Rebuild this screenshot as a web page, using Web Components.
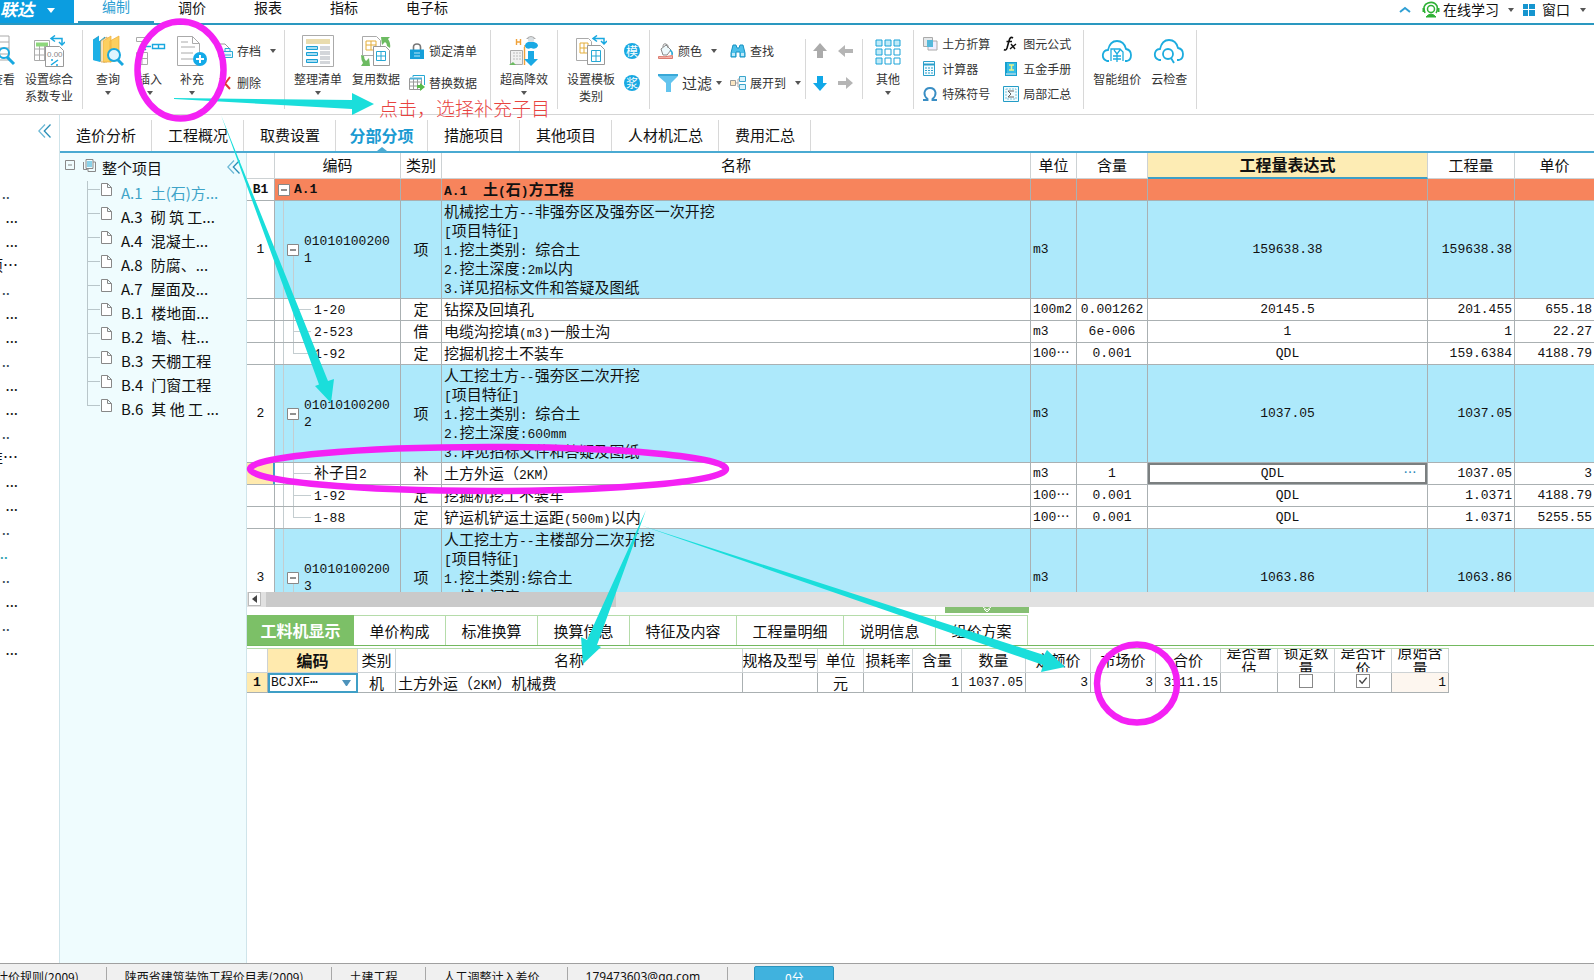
<!DOCTYPE html>
<html lang="zh-CN">
<head>
<meta charset="utf-8">
<title>工程计价 - 分部分项</title>
<style>
html,body{margin:0;height:100%;overflow:hidden;background:#fff;color:#111;font-family:"Noto Sans CJK SC",sans-serif;font-size:15px}
</style>
</head>
<body>
<cost-app></cost-app>
<script>
const icon = {
  down: '<svg width="6" height="4" viewBox="0 0 6 4"><path d="M0 0h6L3 4z" fill="#555"/></svg>',
  fold: '<svg width="14" height="14" viewBox="0 0 14 14" fill="none" stroke-width="1.3"><path d="M7 .5.8 7 7 13.500" stroke="#6db9d6"/><path d="M12.500 .5 6.300 7l6.200 6.500" stroke="#2a8fb8"/></svg>',
  view: '<svg width="32" height="32" viewBox="0 0 32 32" fill="none"><path d="M2 1h20v24H2zM2 7h20M2 13h20M2 19h20" stroke="#aaa"/><circle cx="17" cy="18" r="5" stroke="#18a8e0" stroke-width="2"/><path d="m20 22 7 7" stroke="#18a8e0" stroke-width="3"/></svg>',
  rate: '<svg width="32" height="32" viewBox="0 0 32 32" fill="none"><path d="M1.500 5.500h15v20h-15zM1.500 14h15M1.500 20h15M6.500 11v14M11.500 11v14" stroke="#aaa"/><path d="M3 7.500h12v4H3z" fill="#8ed77c"/><path d="M12.500 11.500h14l4 4v16h-18z" fill="#fff" stroke="#999"/><text x="14" y="22" font-size="8" fill="#888" font-family="Liberation Sans">0.00</text><path d="m18 30 7-5M18 25h2M23 30h2" stroke="#18a8e0" stroke-width="1.500"/><path d="M18 3.500h11v5M22 .5l-4 3 4 3M26 7l3 3 3-3" stroke="#18a8e0" stroke-width="1.500"/></svg>',
  query: '<svg width="32" height="32" viewBox="0 0 32 32" fill="none"><path d="m1 5 6-4v25l-6-1z" fill="#1cb0e6"/><path d="m1 5 6-4M8 26V6l5-4v25z" fill="#48c4ee" stroke="#138fc0" stroke-width=".7"/><path d="m1 5v20l7 2V6z" fill="#1cb0e6"/><path d="m9 6 6-4v25H9z" fill="#fff" stroke="#d99a34" stroke-width=".7"/><path d="M11 6 19 1v26h-8zM18 6l9-5v24l-9 2z" fill="#fccf5f" stroke="#ecac3a" stroke-width=".7"/><circle cx="22" cy="20" r="6" fill="#dff5fe" stroke="#18a8e0" stroke-width="2"/><path d="m26 25 5 5" stroke="#18a8e0" stroke-width="3"/></svg>',
  insert: '<svg width="32" height="32" viewBox="0 0 32 32" fill="none"><path d="M2.500 2.500h11v4h-11zM2.500 17.500h11v12h-11zM2.500 23.500h11M8 17v12" stroke="#aaa"/><path d="M18.500 9.500h12v4h-12zM24.500 9v5" stroke="#18a8e0" stroke-width="1.400"/><path d="M17 11.500H9M12 8l-4 3.500 4 3.500" stroke="#18a8e0" stroke-width="1.400"/></svg>',
  add: '<svg width="32" height="32" viewBox="0 0 32 32" fill="none"><path d="M1.500 1.500h15l7 7v22h-22z" fill="#fff" stroke="#aaa"/><path d="M16.500 1.500v7h7M5 7h7M5 12h14M5 18h12M5 24h12" stroke="#aaa"/><circle cx="24" cy="24" r="7" fill="#13aae8"/><path d="M20 24h8M24 20v8" stroke="#fff" stroke-width="2"/></svg>',
  store: '<svg width="16" height="16" viewBox="0 0 16 16" fill="none"><path d="M2 1h6l4 4v9H2z" stroke="#999"/><path d="M6.500 8.500h9v6h-9zM8 8V5.500h5V8M8 12h6" fill="#e7f8fd" stroke="#27a8d4"/></svg>',
  del: '<svg width="16" height="16" viewBox="0 0 16 16"><path d="m3 3 10 11M13 2 4 14" stroke="#e03434" stroke-width="2" fill="none"/></svg>',
  tidy: '<svg width="32" height="32" viewBox="0 0 32 32" fill="none"><path d="M.5.5h31v31H.5z" fill="#fff" stroke="#aaa"/><path d="M4 4h24v5H4z" fill="#e9dcae"/><path d="M18 11h10v4H18zM18 16h10v4H18zM18 21h10v4H18zM18 26h10v3H18z" fill="#d3d6da"/><path d="M4.500 11.500h11v3h-11zM4.500 17.500h11v3h-11zM4.500 24.500h11v3h-11z" fill="#a9def2" stroke="#1aa0d4"/></svg>',
  reuse: '<svg width="32" height="32" viewBox="0 0 32 32" fill="none"><path d="M2.500 1.500h14l4 4v15h-18z" fill="#fff" stroke="#aaa"/><path d="M6 6h10v9H6zM6 10h10M11 6v9" stroke="#e4ae3a"/><path d="M13.500 11.500h12l4 4v15h-16z" fill="#fff" stroke="#999"/><path d="M16.500 16.500h9v9h-9zM16.500 21h9M21 16v10" stroke="#27a8d4"/><path d="M21 2h9l-2 2q3 4 2 9l-3-2q0-3-2-4l-3 3zM10 31H1l2-3q-2-3-2-8l3 1q0 3 2 5l3-3z" fill="#6dbb62"/></svg>',
  lock: '<svg width="16" height="16" viewBox="0 0 16 16" fill="none"><path d="M4.500 7V4q0-3 3.500-3t3.500 3v3" stroke="#777" stroke-width="1.600"/><path d="M1 6.500h14V16H1z" fill="#159fd9"/><path d="M5 10h6M5 13h6" stroke="#b7e6f8"/></svg>',
  swap: '<svg width="16" height="16" viewBox="0 0 16 16" fill="none"><path d="M4 2V.5h11.500V10" stroke="#27a8d4"/><path d="M.5 3.500h12v11H.5zM.5 7h12M.5 11h12M4.500 4v10M8.500 4v10" stroke="#999"/><path d="M1 3.500h12" stroke="#52b2d8" stroke-width="2"/><path d="M8 10h3V8l5 4-5 4v-3H8z" fill="#58bc4b"/></svg>',
  high: '<svg width="32" height="32" viewBox="0 0 32 32" fill="none"><path d="M2.500 15.500h12v14h-12z" fill="#f1f1f1" stroke="#aaa"/><path d="M5 18h8M5 21h8M5 24h8" stroke="#bbb" stroke-dasharray="2 1"/><path d="m1 30 4-3 3 3z" fill="#6dbb62"/><path d="M16.500 12v18M8.500 4v6M12.500 4v6M8 7h5M16 11h4" stroke="#f0a23a" stroke-width="1.400"/><path d="M18 4q5-6 10 0z" fill="#aaa"/><circle cx="23" cy="5" r="3" fill="#d9dfe2"/><path d="M20 7h6q4 1 4 4-2 4-7 2-5 2-6-2 0-3 3-4zM20 16h6v8h4l-7 7-7-7h4z" fill="#1aa9e4"/></svg>',
  form: '<svg width="32" height="32" viewBox="0 0 32 32" fill="none"><path d="M1.500 3.500h12l3 3v19h-15z" fill="#fff" stroke="#aaa"/><path d="M5 8h8v10H5zM5 13h8M9 8v10" stroke="#e4ae3a"/><path d="M12.500 10.500h13l4 4v15h-17z" fill="#fff" stroke="#999"/><path d="M16.500 15.500h9v11h-9zM16.500 21h9M21 15v12" stroke="#27a8d4"/><path d="M18 3.500h11v5M22 .5l-4 3 4 3M26 6l3 3 3-3" stroke="#18a8e0" stroke-width="1.500"/></svg>',
  colour: '<svg width="16" height="16" viewBox="0 0 16 16" fill="none"><path d="m3 6 5-4 5 5-4 5H5z" fill="#eef9fc" stroke="#888"/><path d="M5 4q0-4 3-3t2 4" stroke="#888"/><path d="M12 7q3 2 2 5" stroke="#27a8d4" stroke-width="1.500"/><path d="M.5 13.500q6 1 14-1v3H.5z" fill="#f6b5ac" stroke="#db7c70"/></svg>',
  find: '<svg width="16" height="16" viewBox="0 0 16 16"><path d="M3 2h3l1 3h2l1-3h3l2 8v4h-5V9H6v5H1v-4z" fill="#4cc0ea" stroke="#1792c2"/><path d="M2 10h3v3H2zM11 10h3v3h-3z" fill="#bfeafa"/></svg>',
  filter: '<svg width="20" height="20" viewBox="0 0 20 20"><path d="M0 1h20v2l-7 7v9H8v-9L0 3z" fill="#63c4ee"/><path d="M0 1h20v2H0z" fill="#3aa9d8"/></svg>',
  expand: '<svg width="16" height="16" viewBox="0 0 16 16" fill="none"><path d="M.5 5.500h5v5h-5z" fill="#fbe7c2" stroke="#999"/><path d="M9.500 1.500h6v5h-6zM9.500 9.500h6v5h-6z" fill="#d9f3fc" stroke="#3ba5cc"/><path d="M6 8h2M8 4v8M8 4h2M8 12h2" stroke="#aaa"/></svg>',
  up: '<svg width="16" height="16" viewBox="0 0 16 16"><path d="m8 0 7 8h-4v7H5V8H1z" fill="#ababab"/></svg>',
  left: '<svg width="16" height="16" viewBox="0 0 16 16"><path d="m0 8 7-6v4h8v4H7v4z" fill="#b5b5b5"/></svg>',
  dn: '<svg width="16" height="16" viewBox="0 0 16 16"><path d="m8 16 7-8h-4V1H5v7H1z" fill="#10a8e8"/></svg>',
  right: '<svg width="16" height="16" viewBox="0 0 16 16"><path d="M15 8 8 2v4H0v4h8v4z" fill="#b5b5b5"/></svg>',
  other: '<svg width="32" height="32" viewBox="0 0 32 32" fill="none" stroke="#1ba3d8"><path d="M4 5h6v6H4zM13 5h6v6h-6zM22 5h6v6h-6zM4 14h6v6H4zM4 23h6v6H4z" fill="#bfeaf8"/><path d="M13 14h6v6h-6zM22 14h6v6h-6zM13 23h6v6h-6zM22 23h6v6h-6z" fill="#fff"/></svg>',
  earth: '<svg width="16" height="16" viewBox="0 0 16 16" fill="none"><path d="M1.500 1.500h9v9h-9z" fill="#e4e8ea" stroke="#aaa"/><path d="M6 5h9v9H6z" fill="#eef" stroke="#aaa"/><path d="M5 4h6v7H5z" fill="#54b8da"/></svg>',
  calc: '<svg width="16" height="16" viewBox="0 0 16 16" fill="none"><path d="M1.500.5h11v14h-11z" fill="#f4fcff" stroke="#2a9fca"/><path d="M2 3.500h10" stroke="#2a9fca" stroke-width="2"/><path d="M3 7h9M3 9.500h9M3 12h9" stroke="#2a9fca" stroke-dasharray="2 1"/></svg>',
  omega: '<svg width="16" height="16" viewBox="0 0 16 16"><path d="M1 14h4.500v-1Q2 10 2.500 6.500 3.500 2 8 2t5.500 4.500Q14 10 10.500 13v1H15" fill="none" stroke="#3a8ec4" stroke-width="1.900"/></svg>',
  fx: '<svg width="16" height="16" viewBox="0 0 16 16" fill="none" stroke="#111"><path d="M10 2Q7 0 6 5l-2 7q-1 3-3 1.500M3.500 5.500H9" stroke-width="1.600"/><path d="m8 8 4 5M13 8l-6 5" stroke-width="1.400"/></svg>',
  metal: '<svg width="16" height="16" viewBox="0 0 16 16"><path d="M2 1h12v14H2z" fill="#17a0ce"/><path d="M4 2h9v10H4z" fill="#35bde6"/><path d="M6 4h5M8.500 4v5M6 9h5" stroke="#e7f28a" stroke-width="1.500"/><path d="M3 13h10" stroke="#fff"/></svg>',
  sum: '<svg width="16" height="16" viewBox="0 0 16 16" fill="none"><path d="M.5.500h15v15H.5z" fill="#f1fbfe" stroke="#249cc6"/><path d="M3 3h10v10H3z" stroke="#7fc3da" stroke-dasharray="2 1"/><path d="M11 5H5l3 3-3 3h6" stroke="#666"/></svg>',
  cloudY: '<svg width="32" height="32" viewBox="0 0 32 32" fill="none" stroke="#1cacdf" stroke-width="1.800"><path d="M8 26H6q-5-2-4-7 1-4 5-4Q9 6 16 6t9 8q5 1 5 6t-4 6h-2"/><path d="M10 26V14h9l3 3v9M13 15l3 4 3-4M16 19v8M12 21h8M12 24h8" stroke-width="1.300"/></svg>',
  cloudQ: '<svg width="32" height="32" viewBox="0 0 32 32" fill="none" stroke="#1cacdf" stroke-width="1.800"><path d="M8 25H6q-5-2-4-7 1-4 5-4Q9 5 16 5t9 8q5 1 5 6t-4 6h-2"/><circle cx="15" cy="19" r="5"/><path d="m18 23 3 5"/></svg>',
  learn: '<svg width="18" height="18" viewBox="0 0 18 18" fill="none" stroke="#2eb135"><path d="M3 12Q0 4 6 2q6-2 9 3 1 4-1 7" stroke-width="1.600"/><circle cx="9" cy="8" r="3.500" stroke-width="1.500"/><path d="M4 16q5-6 10 0z" fill="#2eb135"/><path d="M1.500 7v4M16.500 7v4" stroke-width="2"/></svg>',
  doc: '<svg width="11" height="13" viewBox="0 0 11 13"><path d="M.5.500h6l4 4v8H.5zM6.500.500v4h4" fill="#fff" stroke="#888"/></svg>',
  minus: '<svg width="12" height="12" viewBox="0 0 12 12"><path d="M.5.500h11v11H.5z" fill="#fff" stroke="#888"/><path d="M3 6h6" stroke="#222"/></svg>'
};

const define = (name, render) => customElements.define(name, class extends HTMLElement {
  connectedCallback() {
    if (this.shadowRoot) return;
    const t = document.createElement('template');
    t.innerHTML = render(this);
    this.attachShadow({mode: 'open'}).append(t.content.cloneNode(true));
  }
});
const reset = ':host,*{box-sizing:border-box}svg{display:block;flex:none}button{font:inherit;color:inherit;background:none;border:0;padding:0;margin:0;text-align:center;white-space:nowrap}';

/* Title menu */
define('app-menu', () => `<style>${reset}
:host{display:flex;height:25px;border-bottom:2px solid #2a98c0;font-size:14px;line-height:12px;flex:none}
.logo{width:74px;height:23px;background:#0b9de0;color:#fff;display:flex;gap:13px;font-size:17px;font-weight:700;font-style:italic;line-height:18px}
.logo svg{margin-top:8px}
nav{display:flex;margin-left:4px}
nav button{padding:0 24px 12px;line-height:12px;height:25px}
nav .on{color:#2f9fd4;border-bottom:4px solid #2a98c0;padding-bottom:9px}
.right{margin-left:auto;display:flex;align-items:center;height:19px;padding-right:8px}
.right button{display:flex;align-items:center;line-height:19px}
</style>
<button class="logo"><span>联达</span><svg width="8" height="5" viewBox="0 0 8 5"><path d="M0 0h8L4 5z" fill="#fff"/></svg></button>
<nav><button class="on">编制</button><button>调价</button><button>报表</button><button>指标</button><button>电子标</button></nav>
<div class="right"><button aria-label="收起" style="margin-right:11px"><svg width="12" height="7" viewBox="0 0 12 7"><path d="m1 6 5-4 5 4" fill="none" stroke="#2f9fd4" stroke-width="2"/></svg></button>
<button style="gap:3px;margin-right:9px">${icon.learn}在线学习<span style="margin-left:6px">${icon.down}</span></button>
<button style="gap:7px"><svg width="12" height="12" viewBox="0 0 12 12"><path d="M0 0h5v5H0zM6 0h6v5H6zM0 6h5v6H0zM6 6h6v6H6z" fill="#1595cf"/></svg>窗口<span style="margin-left:3px">${icon.down}</span></button></div>`);

/* Large ribbon command: icon above, one or two lines of label */
define('tool-big', el => `<style>${reset}
:host{display:block}
button{min-width:42px;padding:0 5px;display:flex;flex-direction:column;align-items:center;line-height:17px}
:host([tight]) button{min-width:34px;padding:0 1px}
.t{margin-top:3px}.d{margin-top:4px}
</style><button>${icon[el.getAttribute('icon')]}<span class="t"><slot></slot></span>${el.hasAttribute('menu') ? `<span class="d">${icon.down}</span>` : ''}</button>`);

/* Small ribbon command: icon beside the label */
define('tool-small', el => `<style>${reset}
:host{display:flex;align-items:center;padding-left:4px}
button{display:flex;align-items:center;gap:4px;line-height:16px}
.d{margin-left:5px}
:host(.big) .d{margin-left:0}
</style><button>${icon[el.getAttribute('icon')]}<slot></slot>${el.hasAttribute('menu') ? `<span class="d">${icon.down}</span>` : ''}</button>`);

define('tool-group', () => `<style>
:host{display:flex;padding:5px 4px 0;margin-top:5px;height:79px;box-sizing:border-box;border-right:1px solid #d8d8d8;flex:none}
</style><slot></slot>`);

define('ribbon-bar', () => `<style>${reset}
:host{display:flex;height:90px;border-bottom:1px solid #d5d5d5;font-size:12px;color:#333;flex:none;overflow:hidden}
.stack{display:grid;grid-auto-rows:32px}
.two{grid-template-columns:72px auto}
.three{grid-auto-rows:25px;grid-template-columns:81px auto;margin-top:-4px}
.first{margin-left:-18px}
.big{font-size:15px}
.badge{width:16px;height:16px;border-radius:8px;background:#19a9e2;color:#fff;font-size:12px;line-height:16px;align-self:center;margin:0 5px 0 4px}
.arrows{grid-template-columns:26px 26px;align-items:center;justify-items:center}
.short{height:60px;margin-top:14px;padding:0 3px 0 1px}
.short .stack{margin-top:-4px}
</style>
<tool-group class="first"><tool-big icon="view" tight>查看</tool-big><tool-big icon="rate">设置综合<br>系数专业</tool-big></tool-group>
<tool-group><tool-big icon="query" menu>查询</tool-big><tool-big icon="insert" menu>插入</tool-big><tool-big icon="add" menu>补充</tool-big>
<div class="stack" style="padding-right:4px"><tool-small icon="store" menu>存档</tool-small><tool-small icon="del">删除</tool-small></div></tool-group>
<tool-group><tool-big icon="tidy" menu>整理清单</tool-big><tool-big icon="reuse">复用数据</tool-big>
<div class="stack" style="padding-right:9px"><tool-small icon="lock">锁定清单</tool-small><tool-small icon="swap">替换数据</tool-small></div></tool-group>
<tool-group><tool-big icon="high" menu>超高降效</tool-big></tool-group>
<tool-group><tool-big icon="form">设置模板<br>类别</tool-big><div class="stack"><button class="badge">模</button><button class="badge">浆</button></div></tool-group>
<tool-group style="border:0"><div class="stack two"><tool-small icon="colour" menu>颜色</tool-small><tool-small icon="find">查找</tool-small><tool-small icon="filter" menu class="big">过滤</tool-small><tool-small icon="expand" menu>展开到</tool-small></div></tool-group>
<tool-group class="short" style="border-left:1px solid #d8d8d8"><div class="stack arrows"><button aria-label="上移">${icon.up}</button><button aria-label="升级">${icon.left}</button><button aria-label="下移">${icon.dn}</button><button aria-label="降级">${icon.right}</button></div></tool-group>
<tool-group><tool-big icon="other" menu>其他</tool-big></tool-group>
<tool-group style="padding-right:12px"><div class="stack three"><tool-small icon="earth">土方折算</tool-small><tool-small icon="fx">图元公式</tool-small><tool-small icon="calc">计算器</tool-small><tool-small icon="metal">五金手册</tool-small><tool-small icon="omega">特殊符号</tool-small><tool-small icon="sum">局部汇总</tool-small></div></tool-group>
<tool-group><tool-big icon="cloudY">智能组价</tool-big><tool-big icon="cloudQ">云检查</tool-big></tool-group>`);

/* Collapsed project strip; only the ends of the names show */
const strip = ['..','...','...','项…','..','...','...','..','...','...','..','准…','...','...','..','-..','..','...','..','...'];
define('project-strip', () => `<style>${reset}
:host{display:block;width:60px;flex:none;border-right:1px solid #cfe4ea}
.fold{display:block;margin:9px 0 0 38px}
ul{list-style:none;margin:43px 0 0;padding:0;width:18px}
li{height:24px;line-height:24px;display:flex;justify-content:flex-end;overflow:hidden;white-space:nowrap}
.s{width:10px;color:#345}.cur{width:8px;color:#1a9aac}
</style><button class="fold" aria-label="展开项目">${icon.fold}</button>
<ul>${strip.map(s => `<li class="${s === '..' ? 's' : s === '-..' ? 'cur' : ''}">${s}</li>`).join('')}</ul>`);

define('page-tabs', () => `<style>${reset}
:host{display:flex;height:38px;padding-top:5px;border-bottom:2px solid #4aaad2;flex:none}
button{padding:0 16px 2px;border-right:1px solid #d8d8d8;width:92px;position:relative}
.w{width:107px}
.on{color:#1b9bd2;font-weight:700;font-size:16px;padding:0 13px 2px}
.on::after{content:"";position:absolute;left:50%;bottom:0;margin-left:-5px;border:5px solid transparent;border-top:0;border-bottom:4px solid #4aaad2}
</style><button>造价分析</button><button>工程概况</button><button>取费设置</button><button class="on">分部分项</button><button>措施项目</button><button>其他项目</button><button class="w">人材机汇总</button><button>费用汇总</button>`);

const sections = [['A.1','土(石)方...'],['A.3','砌 筑 工...'],['A.4','混凝土...'],['A.8','防腐、...'],['A.7','屋面及...'],['B.1','楼地面...'],['B.2','墙、柱...'],['B.3','天棚工程'],['B.4','门窗工程'],['B.6','其 他 工 ...']];
define('section-tree', () => `<style>${reset}
:host{display:block;width:187px;flex:none;background:#effcfe;border-right:1px solid #cfe4ea}
.root{display:flex;align-items:center;height:28px;padding:0 5px 0 5px}
.root svg{margin-bottom:4px}
.root b{font-weight:400;flex:1;margin-left:6px}
.root button svg{margin:0}
ul{list-style:none;margin:0 0 0 27px;padding:0}
li{height:24px;display:flex;align-items:center;gap:8px;white-space:nowrap;background:linear-gradient(#b9c6ca,#b9c6ca) 0 0/1px 100% no-repeat,linear-gradient(#b9c6ca,#b9c6ca) 0 8px/13px 1px no-repeat}
li:last-child{background-size:1px 8px,13px 1px}
li svg{margin:0 1px 8px 14px}
li a{color:inherit;text-decoration:none;display:flex;gap:8px;padding-bottom:2px}
.on{color:#3fa4c8}
</style>
<div class="root"><svg width="10" height="10" viewBox="0 0 10 10"><path d="M.5.500h9v9h-9zM3 5h4" fill="none" stroke="#888"/></svg>
<svg style="margin-left:8px" width="13" height="13" viewBox="0 0 13 13" fill="none"><path d="M.5 3v7.500h4M3 .5h7v9H3zM10 3h2.500v9.500H5V10" stroke="#888"/><path d="M4 3h5M4 5h5M4 7h5" stroke="#27a8d4"/></svg>
<b>整个项目</b><button aria-label="收起">${icon.fold}</button></div>
<ul>${sections.map(([c, t], i) => `<li class="${i ? '' : 'on'}">${icon.doc}<a href="#"><span>${c}</span><span>${t}</span></a></li>`).join('')}</ul>`);

/* Half-width runs use the fixed-pitch face beside the full-width characters */
const mix = s => s.replace(/[\x20-\x7e]+/g, m => `<span class="m">${m}</span>`);
const item = (n, code, lines, q) => `<tr class="item"><th scope="row">${n}</th><td class="code"><div class="c1">${icon.minus}<span>${code}</span></div></td><td class="ctr cj">项</td><td class="name cj">${lines.map(mix).join('<br>')}</td><td>m3</td><td></td><td class="ctr">${q}</td><td class="num">${q}</td><td></td></tr>`;
const sub = (code, kind, name, unit, r, e, q, p, last) => `<tr><th scope="row"></th><td class="code"><div class="c2 ${last ? 'last' : ''}">${mix(code)}</div></td><td class="ctr cj">${kind}</td><td class="name cj">${mix(name)}</td><td>${unit}</td><td class="ctr">${r}</td><td class="ctr">${e}</td><td class="num">${q}</td><td class="num">${p}</td></tr>`;
define('bill-grid', () => `<style>${reset}
:host{display:block;height:439px;overflow:hidden;flex:none}
table{width:100%;table-layout:fixed;border-collapse:separate;border-spacing:0;font-family:"Liberation Mono","Noto Sans CJK SC",monospace;font-size:13px;line-height:17px}
th,td{border-right:1px solid #aab0b2;border-bottom:1px solid #aab0b2;padding:0 2px;height:22px;text-align:left;overflow:hidden;white-space:nowrap;font-weight:400}
th:last-child,td:last-child{border-right:0}
thead th{height:26px;padding-bottom:2px;text-align:center;font:15px/20px "Noto Sans CJK SC",sans-serif;border-color:#cdd2d4}
thead .hot{background:#fdecb4;font-weight:700;font-size:16px;border-bottom:2px solid #3f9fc6}
th[scope=row]{text-align:center;padding:0}
.cj{font-family:"Noto Sans CJK SC",sans-serif;font-size:15px;line-height:19px;padding-bottom:2px}
.m{font-family:"Liberation Mono",monospace;font-size:13px;line-height:0;white-space:pre}
.ctr{text-align:center}.num{text-align:right}
.chapter td{background:#f7845c;font-weight:700}.chapter th{font-weight:700}
.item td{background:#ade9fb;height:98px}
.item .name{vertical-align:top}
.code{padding:0}
.c0,.c1{display:flex;align-items:center}
.c0{padding-left:3px;gap:4px}
.c1{padding:0 0 0 12px;gap:5px;height:97px;background:linear-gradient(#c4cdd0,#c4cdd0) 8px 0/1px 100% no-repeat,linear-gradient(#c4cdd0,#c4cdd0) 18px 50px/1px 47px no-repeat}
.c1 span{width:90px;white-space:normal;word-break:break-all}
.c2{height:21px;line-height:18px;padding-left:39px;font-family:"Noto Sans CJK SC",sans-serif;font-size:15px;background:linear-gradient(#c4cdd0,#c4cdd0) 8px 0/1px 100% no-repeat,linear-gradient(#c4cdd0,#c4cdd0) 18px 0/1px 100% no-repeat,linear-gradient(#c4cdd0,#c4cdd0) 18px 10px/18px 1px no-repeat}
.c2.last{background-size:1px 100%,1px 10px,18px 1px}
.cur th{background:#ffeaae;border-right:2px solid #3f9fc6}
.edit{padding:0}
.box{display:flex;height:21px;border:2px solid #7b7f80}
input{flex:1;min-width:0;border:0;background:none;padding:0;outline:0;font:inherit;text-align:center;color:inherit}
.box button{width:30px;color:#2a86b8;line-height:10px}
</style>
<table><colgroup><col style="width:28px"><col style="width:126px"><col style="width:41px"><col><col style="width:46px"><col style="width:71px"><col style="width:280px"><col style="width:87px"><col style="width:79px"></colgroup>
<thead><tr><th></th><th>编码</th><th>类别</th><th>名称</th><th>单位</th><th>含量</th><th class="hot">工程量表达式</th><th>工程量</th><th>单价</th></tr></thead>
<tbody><tr class="chapter"><th scope="row">B1</th><td class="code"><div class="c0">${icon.minus}<span>A.1</span></div></td><td></td><td class="name cj">${mix('A.1  土(石)方工程')}</td><td></td><td></td><td></td><td></td><td></td></tr>
${item(1, '010101002001', ['机械挖土方--非强夯区及强夯区一次开挖','[项目特征]','1.挖土类别: 综合土','2.挖土深度:2m以内','3.详见招标文件和答疑及图纸'], '159638.38')}
${sub('1-20','定','钻探及回填孔','100m2','0.001262','20145.5','201.455','655.18')}
${sub('2-523','借','电缆沟挖填(m3)一般土沟','m3','6e-006','1','1','22.27')}
${sub('1-92','定','挖掘机挖土不装车','100⋯','0.001','QDL','159.6384','4188.79', true)}
${item(2, '010101002002', ['人工挖土方--强夯区二次开挖','[项目特征]','1.挖土类别: 综合土','2.挖土深度:600mm','3.详见招标文件和答疑及图纸'], '1037.05')}
<tr class="cur"><th scope="row"></th><td class="code"><div class="c2">${mix('补子目2')}</div></td><td class="ctr cj">补</td><td class="name cj">${mix('土方外运（2KM）')}</td><td>m3</td><td class="ctr">1</td><td class="edit"><div class="box"><input aria-label="工程量表达式" value="QDL"><button aria-label="编辑表达式">⋯</button></div></td><td class="num">1037.05</td><td class="num">3</td></tr>
${sub('1-92','定','挖掘机挖土不装车','100⋯','0.001','QDL','1.0371','4188.79')}
${sub('1-88','定','铲运机铲运土运距(500m)以内','100⋯','0.001','QDL','1.0371','5255.55', true)}
${item(3, '010101002003', ['人工挖土方--主楼部分二次开挖','[项目特征]','1.挖土类别:综合土','2.挖土深度:600mm'], '1063.86')}
</tbody></table>`);

define('grid-scroll', () => `<style>${reset}
:host{display:block;flex:none}
.bar{height:15px;background:#e1e1e1;display:flex;gap:5px;padding-left:1px}
.bar button{width:13px;height:14px;background:#fff;border:1px solid #bbb;padding:2px 3px}
.thumb{width:26%;background:#cacaca}
.grip{height:8px;display:flex;justify-content:center;padding-left:133px}
.grip button{width:84px;height:6px;background:#86bf73;padding:0 38px}
</style><div class="bar"><button aria-label="向左"><svg width="5" height="8" viewBox="0 0 5 8"><path d="M5 0v8L0 4z" fill="#444"/></svg></button><div class="thumb"></div></div>
<div class="grip"><button aria-label="收起下方面板"><svg width="8" height="6" viewBox="0 0 8 6"><path d="m0 0 4 3 4-3M1 2l3 3 3-3" fill="none" stroke="#fff"/></svg></button></div>`);

define('detail-tabs', () => `<style>${reset}
:host{display:flex;height:31px;border-bottom:1px solid #73b95f;flex:none}
button{width:92px;border-top:1px solid #b5dcaa;border-right:1px solid #b5dcaa}
.w{width:107px}
.on{background:#7cc067;color:#fff;font-weight:700;font-size:16px;border:0}
</style><button class="on w">工料机显示</button><button>单价构成</button><button>标准换算</button><button>换算信息</button><button class="w">特征及内容</button><button class="w">工程量明细</button><button>说明信息</button><button>组价方案</button>`);

const widths = [21,90,38,0,75,46,49,49,64,65,65,65,57,57,57,57];
const heads = ['','编码','类别','名称','规格及型号','单位','损耗率','含量','数量','定额价','市场价','合价','是否暂估','锁定数量','是否计价','原始含量'];
define('resource-grid', () => `<style>${reset}
:host{display:block;padding:2px 145px 0 0}
table{width:100%;table-layout:fixed;border-collapse:separate;border-spacing:0;border-top:1px solid #b5dcaa;font-family:"Liberation Mono",monospace;font-size:13px;line-height:17px}
th,td{border-right:1px solid #aab0b2;border-bottom:1px solid #aab0b2;padding:0 2px;height:20px;white-space:nowrap;overflow:hidden;text-align:left;font-weight:400}
thead th{height:24px;padding:0;text-align:center;border-color:#cdd2d4;font:15px/16px "Noto Sans CJK SC",sans-serif}
thead div{height:23px;display:flex;align-items:center;justify-content:center;overflow:hidden;padding-bottom:1px}
thead .two div{white-space:normal;padding:0 5px 1px}
.hot{background:#ffeaae}
thead .hot{font-weight:700;font-size:16px}
th.hot[scope]{font-weight:700;text-align:center;padding:0}
.cj{font-family:"Noto Sans CJK SC",sans-serif;font-size:15px;line-height:18px}
.m{font-family:"Liberation Mono",monospace;font-size:13px;line-height:0}
.ctr{text-align:center}.num{text-align:right}
.pick{padding:0;border:0}
label{display:flex;align-items:center;height:20px;border:2px solid #3f9fc6;padding-right:5px}
select{appearance:none;flex:1;min-width:0;border:0;background:none;padding:0 1px;margin:0;font:inherit;line-height:16px;height:16px;color:#111}
input{appearance:none;width:14px;height:14px;margin:0;border:1px solid #888;background:#fff;vertical-align:top;display:inline-block}
input:checked::before{content:"";display:block;width:12px;height:12px;background:#444;clip-path:polygon(15% 48%,25% 40%,42% 60%,76% 18%,86% 26%,43% 78%)}
.soft{background:#fdf6ef}
</style><table><colgroup>${widths.map(w => `<col${w ? ` style="width:${w}px"` : ''}>`).join('')}</colgroup>
<thead><tr>${heads.map((h, i) => `<th class="${i === 1 ? 'hot' : i > 11 ? 'two' : ''}"><div>${h}</div></th>`).join('')}</tr></thead>
<tbody><tr><th scope="row" class="hot">1</th><td class="pick"><label><select aria-label="编码"><option>BCJXF⋯</option></select><svg width="9" height="6" viewBox="0 0 9 6"><path d="M0 0h9L5 6H4z" fill="#4d93bb"/></svg></label></td><td class="ctr cj">机</td><td class="cj">${mix('土方外运（2KM）机械费')}</td><td></td><td class="ctr cj">元</td><td></td><td class="num">1</td><td class="num">1037.05</td><td class="num">3</td><td class="num">3</td><td class="num">3111.15</td><td></td><td class="ctr"><input type="checkbox" aria-label="锁定数量"></td><td class="ctr"><input type="checkbox" checked aria-label="是否计价"></td><td class="num soft">1</td></tr></tbody></table>`);

define('status-bar', () => `<style>${reset}
:host{display:flex;height:17px;border-top:1px solid #a0a0a0;background:#f0f0f0;font-size:12px;overflow:hidden;flex:none;white-space:nowrap}
span{padding:0 27px 0 18px;border-right:1px solid #a8a8a8;margin-top:3px;height:20px;line-height:20px}
span:first-of-type{margin-left:-22px}
.mail{font-family:"Noto Sans",sans-serif}
button{width:80px;height:24px;margin:2px 0 0 26px;background:#40b2de;border:1px solid #2b94bd;border-radius:2px;color:#fff;line-height:20px}
</style><span>计价规则(2009)</span><span>陕西省建筑装饰工程价目表(2009)</span><span>土建工程</span><span>人工调整计入差价</span><span class="mail">179473603@qq.com</span><button>0分</button>`);

/* Free-hand marks drawn over the window */
define('mark-layer', () => `<style>
:host{position:absolute;left:0;top:0;pointer-events:none}
svg{display:block}
p{position:absolute;left:379px;top:96px;margin:0;color:#e8433f;font-size:19px;line-height:24px;font-weight:300;white-space:nowrap}
</style><svg width="1200" height="740" viewBox="0 0 1200 740">
<g fill="#1adedb"><path d="m174 98 178 2v-7l22 11-22 11v-6l-178-10z"/><path d="m221 115 107 266 6-2-3 24-16-17 4-1.500z"/><path d="m646 510-49 135 4 2-18 17-2-27 6 3z"/><path d="m640 525 404 130 3-5 18 17-24 5 2-7z"/></g>
<g fill="none" stroke="#f421f4"><ellipse cx="180.500" cy="70" rx="43" ry="48.500" stroke-width="6.500"/><ellipse cx="488" cy="469" rx="238" ry="22" stroke-width="6.500"/><ellipse cx="1137" cy="683.500" rx="40" ry="39" stroke-width="6.500"/></g></svg>
<p>点击，选择补充子目</p>`);

define('cost-app', () => `<style>
:host{display:flex;flex-direction:column;height:100vh;position:relative;overflow:hidden}
.main{flex:1;display:flex;min-height:0}
.work{flex:1;min-width:0;display:flex;flex-direction:column}
.body{flex:1;display:flex;min-height:0}
.sheet{flex:1;min-width:0;display:flex;flex-direction:column}
</style><app-menu></app-menu><ribbon-bar></ribbon-bar>
<div class="main"><project-strip></project-strip><div class="work"><page-tabs></page-tabs>
<div class="body"><section-tree></section-tree><div class="sheet"><bill-grid></bill-grid><grid-scroll></grid-scroll><detail-tabs></detail-tabs><resource-grid></resource-grid></div></div></div></div>
<status-bar></status-bar><mark-layer></mark-layer>`);
</script>
</body>
</html>
